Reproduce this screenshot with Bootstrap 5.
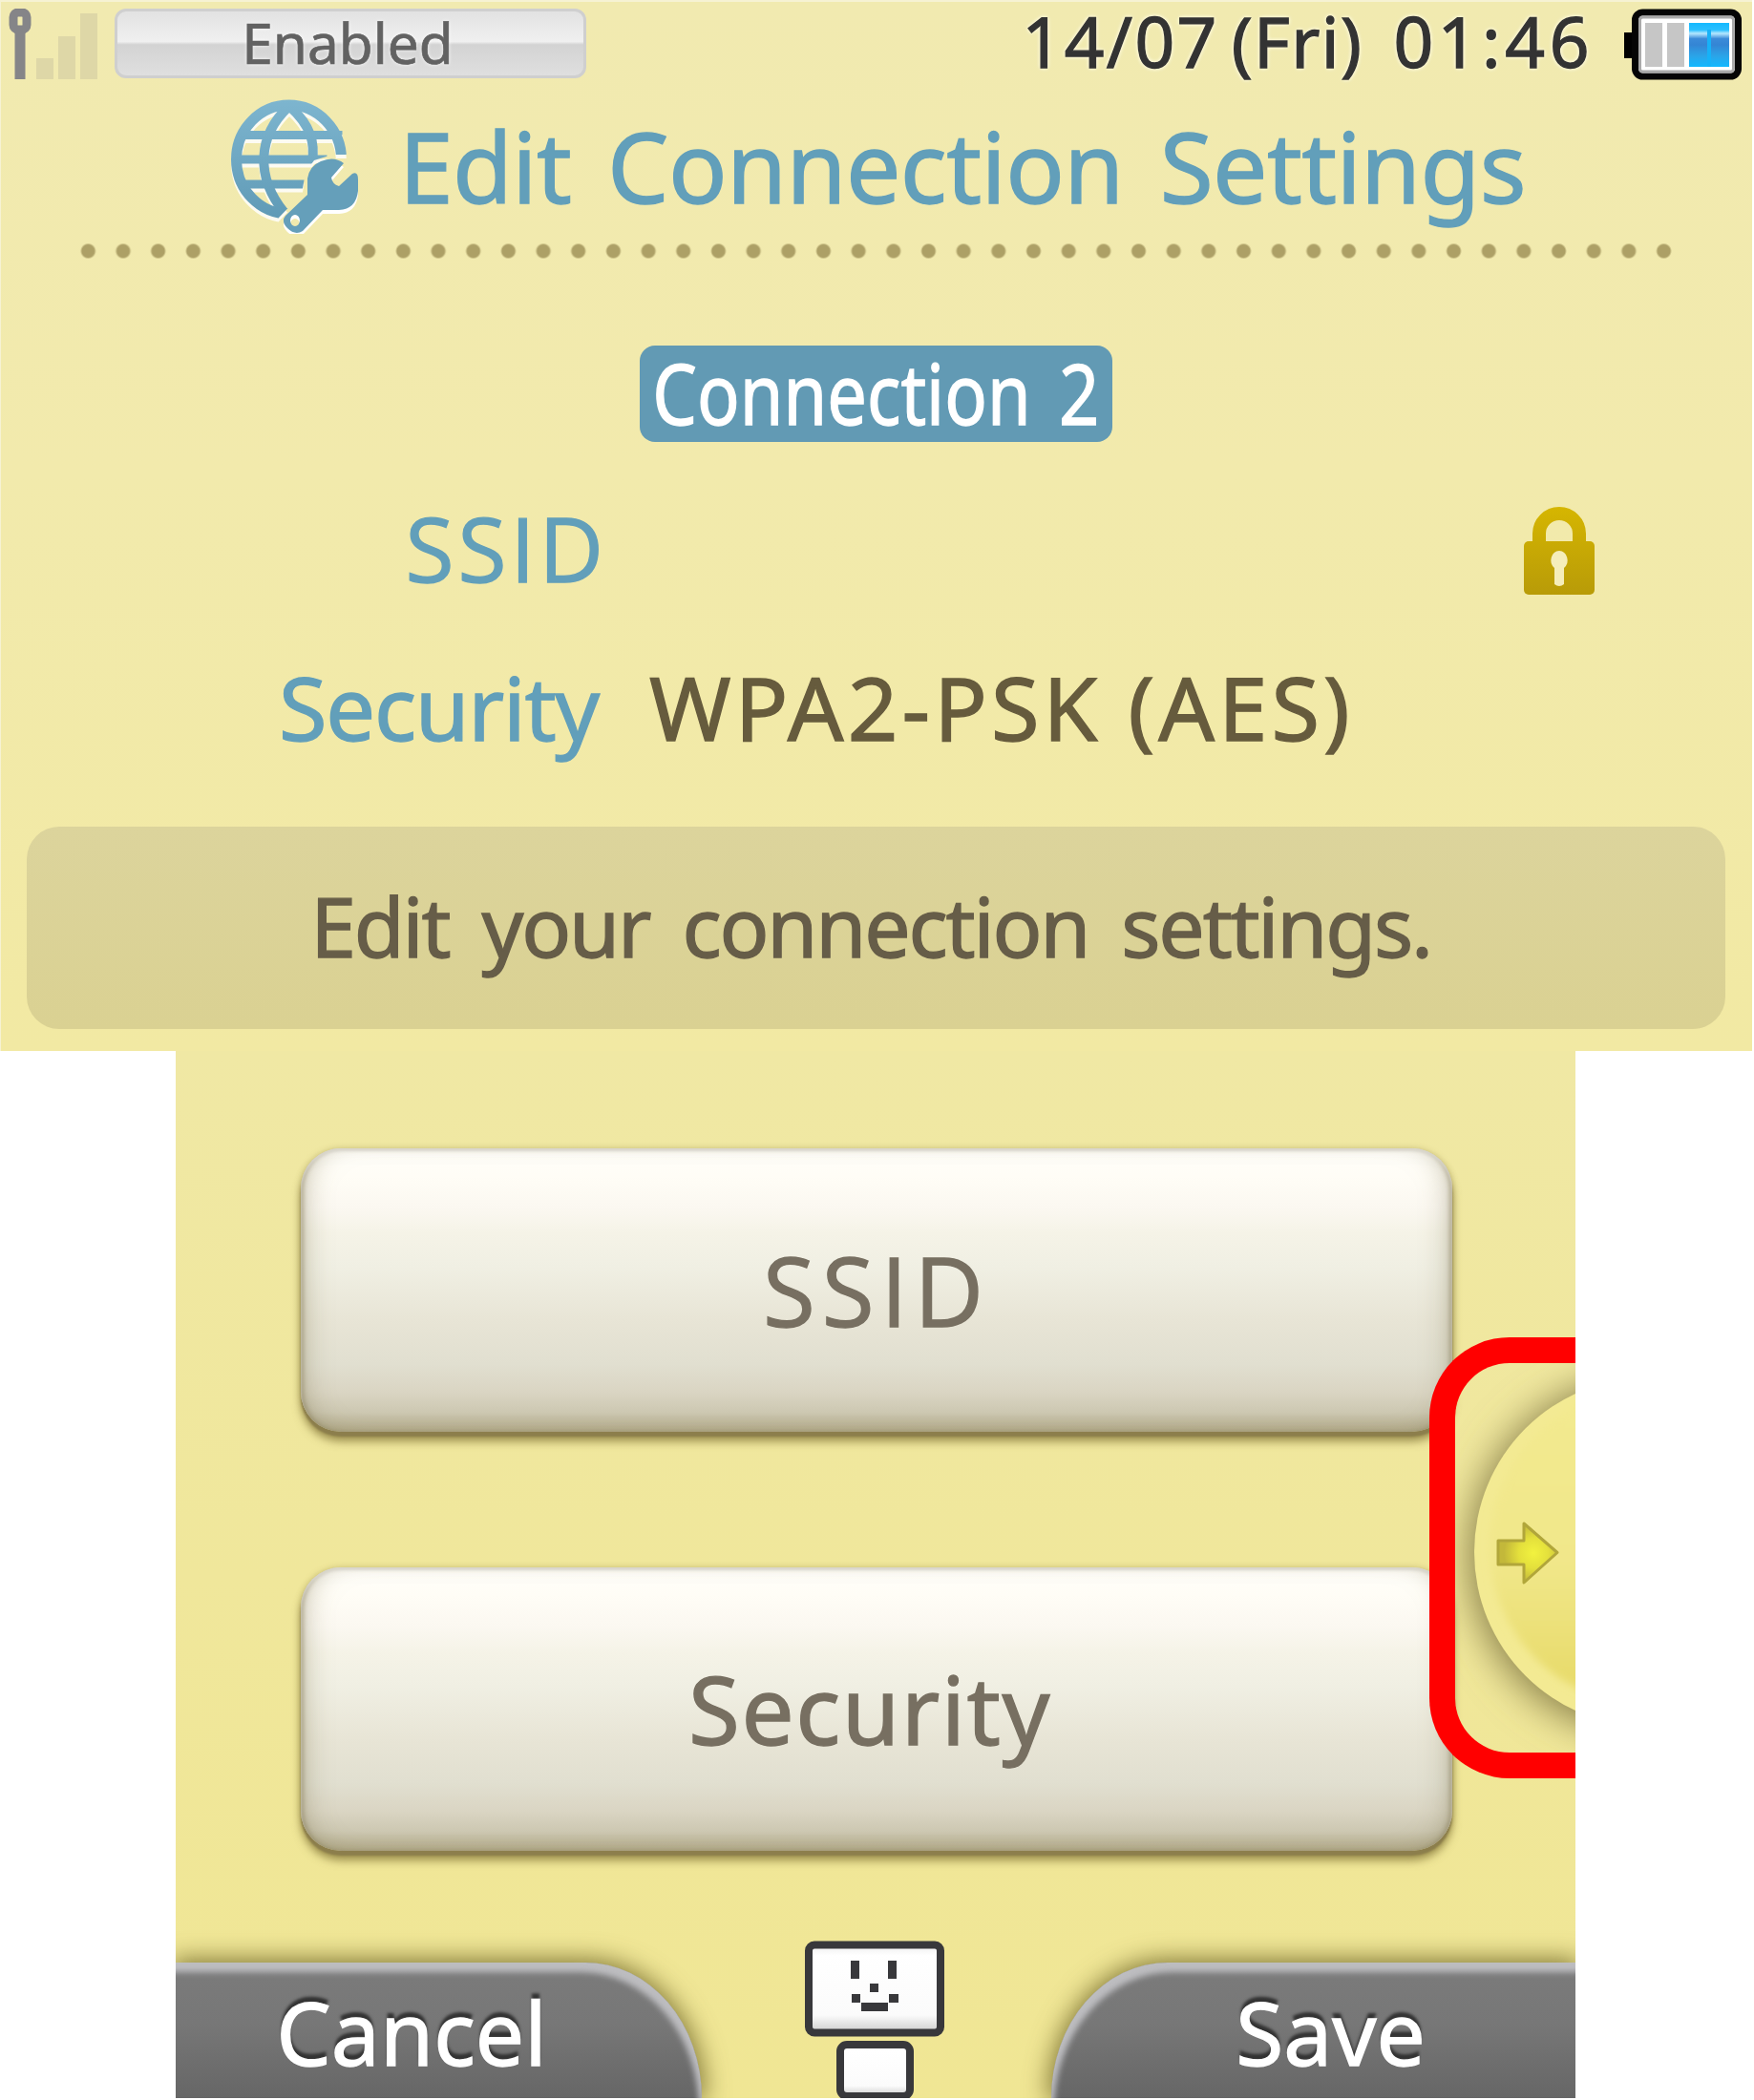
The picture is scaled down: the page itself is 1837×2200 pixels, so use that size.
<!DOCTYPE html>
<html lang="en">
<head>
<meta charset="utf-8">
<meta name="viewport" content="width=device-width, initial-scale=1">
<title>Edit Connection Settings</title>
<link href="https://cdn.jsdelivr.net/npm/bootstrap@5.3.0/dist/css/bootstrap.min.css" rel="stylesheet">
<style>
  body { font-family: "Noto Sans", "Open Sans", sans-serif; line-height: 1; color: #665b3d; background: #fff; }
  .plain-i { font-family: "Open Sans", "Noto Sans", sans-serif; }
  .device { width: 1837px; height: 2200px; -webkit-text-stroke: 1.3px currentColor; }
  .upper { width: 1835px; height: 1101px; background: linear-gradient(#f1eab0, #f2eaac 45%, #f2e9a3); border-top: 2px solid #f6f2d3; border-left: 1px solid #f6f2d3; }
  .status { height: 90px; padding: 7px 9px 0 8px; }
  .signal { width: 96px; height: 74px; }
  .net-state { width: 494px; height: 73px; margin-left: 15px; margin-right: 1px; border-radius: 12px; border: 3px solid #cfcfcf; color: #626262; font-size: 58.5px; background: linear-gradient(#e2e2e2, #f0f0f0 47%, #d3d3d3 52%, #dfdfdf); text-shadow: 0 0 4px #fff; padding: 0 6px 2px 0; -webkit-text-stroke-width: .7px; }
  .clock { height: 66px; font-size: 73px; color: #333; text-shadow: 0 0 4px #fff9dd, 0 0 4px #fff9dd, 0 0 5px #fff9dd; }
  .clock .day { margin: 0 32px 0 13px; letter-spacing: 1.4px; }
  .clock .date { letter-spacing: 2.4px; }
  .clock .hour { letter-spacing: 4.6px; }
  .battery { width: 126px; height: 76px; margin-left: 31px; }
  .heading { height: 160px; padding-left: 237px; color: #629fba; }
  .heading h1 { font-size: 102px; font-weight: 400; line-height: 1; margin: 0 0 0 34px; padding-top: 3px; letter-spacing: -.6px; word-spacing: 12px; white-space: nowrap; }
  .dots { height: 22px; width: 1688px; margin-left: 73px; background: radial-gradient(circle at 50% 50%, #ada066 0 6.4px, transparent 8.4px) 0 0 / 36.68px 22px repeat-x; }
  .conn-badge { width: 495px; height: 101px; margin: 88px 2px 0 0; border-radius: 16px; background: #629ab4; color: #fff; font-size: 87px; padding-bottom: 2px; }
  .conn-badge span { transform: scaleX(.85); white-space: nowrap; word-spacing: 12px; }
  .field { height: 120px; font-size: 92px; white-space: nowrap; }
  .field .key { width: 631px; color: #629fba; padding-top: 3px; }
  .field .key-wide { font-size: 93px; letter-spacing: 4px; width: 635px; }
  .field .key-snug { letter-spacing: -1.3px; padding-right: 5px; }
  .field .val { margin-left: 48px; letter-spacing: 4.1px; padding-top: 3px; }
  .lock { width: 76px; height: 100px; margin-right: 163px; }
  .notice { width: 1779px; height: 212px; margin: 67px 0 0 27px; border-radius: 34px; background: linear-gradient(#dcd49c, #dad192); font-size: 86px; color: #665d48; white-space: nowrap; letter-spacing: -2.2px; word-spacing: 14px; padding: 0 11px 4px 0; }
  .lower { width: 1466px; height: 1097px; margin-left: 184px; background: linear-gradient(#f0e8a4, #f0e79b 50%, #f0e694); }
  .choices { padding: 102px 0 0 131px; gap: 142px; }
  .choice { width: 1206px; height: 297px; border: 0; border-radius: 42px; color: #776f61; font-size: 98px; line-height: 1;
    background: linear-gradient(#fffefa 0, #fffdf6 10%, #fbf8f1 21%, #f5f3e7 30%, #f0efe3 42%, #e8e5d6 60%, #e1dfd0 76%, #dad5c3 86%, #cdc8b2 93%, #b3ab8a 100%);
    box-shadow: inset 0 3px 3px #d9d6cc, inset 5px 0 4px -2px rgba(130,120,85,.45), inset -5px 0 4px -2px rgba(130,120,85,.45), inset 20px 0 34px -24px rgba(120,110,70,.65), inset -20px 0 34px -24px rgba(120,110,70,.65), 0 5px 2px #8c7e4c, 0 10px 10px rgba(120,105,45,.7), 0 0 6px rgba(130,115,50,.35); }
  .choice-ssid { font-size: 100px; letter-spacing: 7px; padding: 0 0 2px; }
  .choice-security { letter-spacing: 1.5px; padding: 0 14px 1px 0; }
  .footer-bar { height: 142px; }
  .tab { height: 142px; color: #fff; font-size: 91px; border: 0; line-height: 1; background: linear-gradient(#7b7b7b, #777 45%, #666);
    text-shadow: 0 -6px 3px #333; }
  .tab-left { width: 551px; padding: 4px 57px 0 0; border-radius: 0 133px 0 0 / 0 155px 0 0; box-shadow: inset -5px 12px 6px -2px #bdbdc0, 0 0 26px 3px rgba(90,80,20,.75); }
  .tab-right { width: 549px; padding: 4px 0 0 36px; border-radius: 133px 0 0 0 / 155px 0 0 0; box-shadow: inset 5px 12px 6px -2px #bdbdc0, 0 0 26px 3px rgba(90,80,20,.75); }
  .robot { width: 150px; height: 167px; margin: -25px 4px 0 0; }
  .callout { right: 0; top: 300px; width: 153px; height: 462px; border: 27px solid red; border-right: 0; border-radius: 84px 0 0 84px; }
  .next-page { right: 0; top: 270px; width: 153px; height: 520px; }
</style>
<script src="https://cdn.jsdelivr.net/npm/bootstrap@5.3.0/dist/js/bootstrap.bundle.min.js"></script>
</head>
<body>
<main class="device overflow-hidden">
  <section class="upper d-flex flex-column">
    <div class="status d-flex align-items-start flex-shrink-0">
      <svg class="signal flex-shrink-0" viewBox="0 0 96 74">
        <rect x="5" y="4" width="14" height="18" rx="5" fill="none" stroke="#858588" stroke-width="9"/>
        <path d="M12 24V74" stroke="#858588" stroke-width="11"/>
        <path d="M29 52h18v22H29zM52 29h18v45H52zM75 5h18v69H75z" fill="#ded7a7"/>
      </svg>
      <div class="net-state d-flex align-items-center justify-content-center">Enabled</div>
      <div class="clock d-flex align-items-center ms-auto text-nowrap"><span class="date">14/07</span><span class="day">(Fri)</span><span class="hour">01:46</span></div>
      <svg class="battery flex-shrink-0" viewBox="0 0 126 76">
        <defs><linearGradient id="charge" x2="0" y2="1"><stop offset="0" stop-color="#14b9ff"/><stop offset=".16" stop-color="#2abfff"/><stop offset=".24" stop-color="#b5e8ff"/><stop offset=".36" stop-color="#3b8bd9"/><stop offset=".5" stop-color="#3485d4"/><stop offset=".75" stop-color="#2ba4e8"/><stop offset="1" stop-color="#12b8ff"/></linearGradient></defs>
        <path d="M1 25h12v27H1z"/>
        <rect x="12.500" y="4" width="108" height="67" rx="8" fill="#fff" stroke="#050505" stroke-width="7"/>
        <rect x="17.500" y="9" width="98" height="57" rx="3" fill="none" stroke="#aaa" stroke-width="3"/>
        <path d="M23 15h18v46H23zM46 15h18v46H46z" fill="#c6c6c6"/>
        <path d="M69 15h42v46H69z" fill="url(#charge)"/>
        <path d="M90 22v39" stroke="#16b2f8" stroke-width="4"/>
      </svg>
    </div>

    <div class="heading d-flex align-items-center flex-shrink-0">
      <svg width="146" height="146" viewBox="240 99 146 146" class="flex-shrink-0">
        <defs>
          <linearGradient id="sky" gradientUnits="userSpaceOnUse" x1="0" y1="105" x2="0" y2="245"><stop offset="0" stop-color="#7db5cf"/><stop offset="1" stop-color="#5c97b3"/></linearGradient>
          <mask id="globeCut" maskUnits="userSpaceOnUse" x="230" y="90" width="170" height="160"><path fill="#fff" d="M230 90h170v160H230z"/><path d="M390 155L364 162L350 162L331 168L322 180L318 203L294 228L296 250H400z" fill="#000"/></mask>
          <g id="globeLines" mask="url(#globeCut)">
            <ellipse cx="304.500" cy="167" rx="55" ry="57"/>
            <path d="M254 141.500H356V141.600M249 167H340V167.100M254 193H326V193.100" stroke-width="9"/>
            <path d="M304 112C272 142 269 185 300 223M306 112C328 132 332 150 329 170" stroke-width="10"/>
          </g>
          <path id="spanner" fill-rule="evenodd" d="M362 171L349 186Q350 193 357 195L371 182Q377 179 377 188V200Q375 219 357 220H340L319 242Q311 247 303 239Q296 232 301 226L324 204V187Q326 174 338 169Q352 163 362 171ZM311 225A5 6 0 1 0 311 237A5 6 0 1 0 311 225Z"/>
        </defs>
        <g fill="none" stroke="#fff" stroke-width="11" opacity=".85" transform="translate(0 4)"><use href="#globeLines"/></g>
        <use href="#spanner" fill="#fff" transform="translate(0 4)"/>
        <g fill="none" stroke="url(#sky)" stroke-width="11"><use href="#globeLines"/></g>
        <use href="#spanner" fill="#659fba"/>
      </svg>
      <h1>Edit Connection Settings</h1>
    </div>
    <div class="dots flex-shrink-0"></div>

    <div class="conn-badge d-flex align-items-center justify-content-center align-self-center flex-shrink-0"><span>Connection 2</span></div>

    <div class="field d-flex align-items-center flex-shrink-0" style="margin-top:50px">
      <div class="key key-wide text-end plain-i">SSID</div>
      <svg class="lock ms-auto" viewBox="0 0 76 100">
        <defs><linearGradient id="gold" gradientUnits="userSpaceOnUse" x1="0" y1="0" x2="0" y2="100"><stop offset="0" stop-color="#d8b800"/><stop offset="1" stop-color="#b89b08"/></linearGradient></defs>
        <path d="M16 48V36a21 21 0 0 1 42 0V48" fill="none" stroke="url(#gold)" stroke-width="14"/>
        <rect y="44" width="74" height="56" rx="5" fill="url(#gold)"/>
        <path d="M37 54a9 10 0 0 1 5 18v17q-5 4-10 0V72a9 10 0 0 1 5-18z" fill="#f5edba"/>
      </svg>
    </div>
    <div class="field d-flex align-items-center flex-shrink-0" style="margin-top:46px">
      <div class="key key-snug text-end">Security</div>
      <div class="val">WPA2-PSK (AES)</div>
    </div>

    <div class="notice d-flex align-items-center justify-content-center flex-shrink-0">Edit your connection settings.</div>
  </section>

  <section class="lower position-relative overflow-hidden d-flex flex-column">
    <div class="choices d-flex flex-column">
      <button class="choice choice-ssid plain-i">SSID</button>
      <button class="choice choice-security">Security</button>
    </div>
    <div class="footer-bar d-flex justify-content-between mt-auto">
      <button class="tab tab-left">Cancel</button>
      <svg class="robot flex-shrink-0" viewBox="842 2032 150 167">
        <defs>
          <linearGradient id="face" x2="0" y2="1"><stop offset="0" stop-color="#eee"/><stop offset=".12" stop-color="#fff"/><stop offset=".8" stop-color="#fbfbfb"/><stop offset="1" stop-color="#ccc"/></linearGradient>
        </defs>
        <rect x="848" y="2038.500" width="138" height="92" rx="6" fill="url(#face)" stroke="#38383b" stroke-width="8"/>
        <rect x="881" y="2143" width="73" height="54" rx="7" fill="url(#face)" stroke="#38383b" stroke-width="8"/>
        <path d="M892 2055h9v19h-9zM931 2055h9v19h-9zM912 2079h9v9h-9zM893 2090h9v9h-9zM932 2090h10v9h-10zM903 2099h28v9h-28z" fill="#38383b"/>
      </svg>
      <button class="tab tab-right">Save</button>
    </div>

    <!-- Next-page handle peeking in from the screen edge -->
    <svg class="next-page position-absolute" viewBox="1497 1371 153 520">
      <defs>
        <filter id="soft" x="-30%" y="-30%" width="160%" height="160%"><feGaussianBlur stdDeviation="20"/></filter>
        <filter id="slight" x="-30%" y="-30%" width="160%" height="160%"><feGaussianBlur stdDeviation="4"/></filter>
        <linearGradient id="knob" x1="0" y1="0" x2="0" y2="1"><stop offset="0" stop-color="#f3ea90"/><stop offset=".55" stop-color="#f1e78a"/><stop offset=".9" stop-color="#e8dc6d"/><stop offset="1" stop-color="#e9dd70"/></linearGradient>
        <radialGradient id="glow" cx=".6" cy=".5" r=".5"><stop offset="0" stop-color="#f2f23f"/><stop offset=".5" stop-color="#e4e03c"/><stop offset="1" stop-color="#c3b83a"/></radialGradient>
        <clipPath id="ringArea"><rect x="1510" y="1415" width="300" height="434" rx="60"/></clipPath>
      </defs>
      <g clip-path="url(#ringArea)"><circle cx="1727" cy="1630" r="188" fill="#887f48" filter="url(#soft)"/></g>
      <circle cx="1727" cy="1626" r="183" fill="#f3ea93"/>
      <circle cx="1727" cy="1620" r="167" fill="url(#knob)" filter="url(#slight)"/>
      <path d="M1569 1614H1596V1596L1631 1626.500L1596 1658V1639H1569Z" fill="url(#glow)" stroke="#b1a63a" stroke-width="3" stroke-linejoin="round"/>
    </svg>
    <div class="callout position-absolute"></div>
  </section>
</main>
</body>
</html>
